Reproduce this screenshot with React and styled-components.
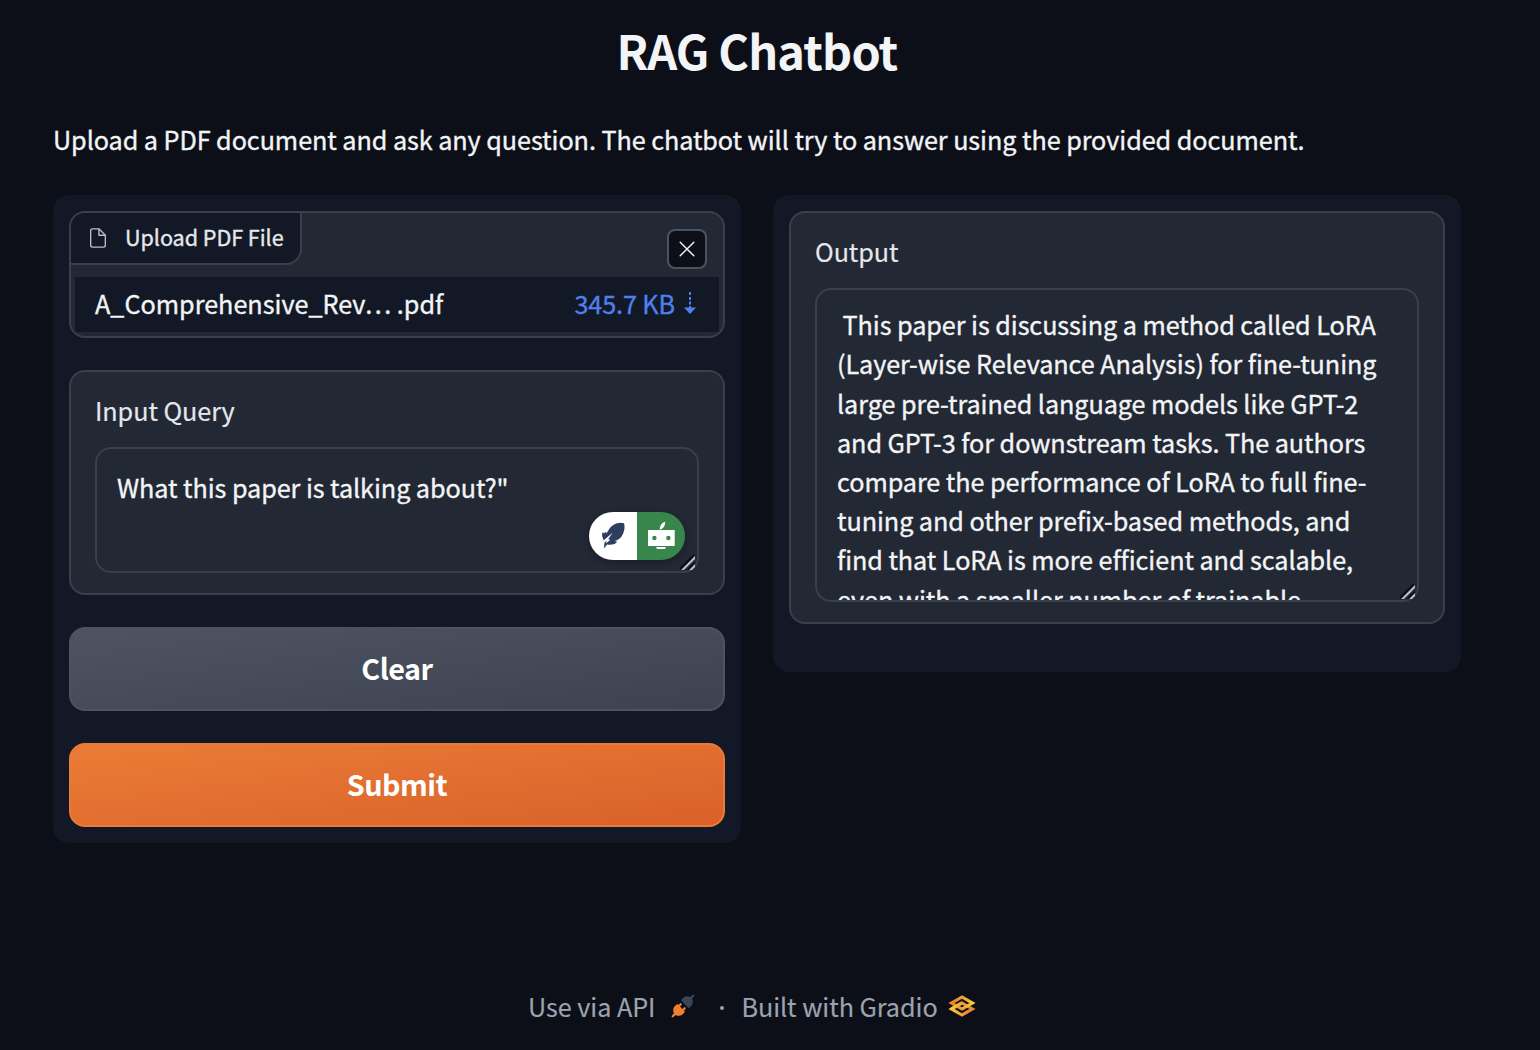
import React from "react";
import styled, { createGlobalStyle } from "styled-components";

const Global = createGlobalStyle`
  * { box-sizing: border-box; }
  body {
    margin: 0;
    background: #0c0f18;
    color: #f3f4f6;
    font-family: "Noto Sans CJK SC", "Noto Sans", sans-serif;
    font-size: 25.2px;
    letter-spacing: -0.06px;
    -webkit-text-stroke: 0.35px currentColor;
  }
`;

const Page = styled.div`
  width: 1540px;
  height: 1050px;
  overflow: hidden;
  padding: 14px 79px 0 53px;
  display: flex;
  flex-direction: column;
`;

const Title = styled.h1`
  margin: 0;
  height: 72px;
  line-height: 72px;
  text-align: center;
  font-size: 46.8px;
  font-weight: 700;
  letter-spacing: -0.84px;
  white-space: nowrap;
  -webkit-text-stroke: 0;
`;

const Description = styled.p`
  margin: 33px 0 36px;
  height: 40px;
  line-height: 40px;
  white-space: nowrap;
`;

const Columns = styled.main`
  display: flex;
  align-items: flex-start;
  gap: 32px;
`;

const Panel = styled.section`
  width: 688px;
  height: ${(p) => p.$height}px;
  padding: 16px;
  border-radius: 16px;
  background: #121825;
  display: flex;
  flex-direction: column;
  gap: 32px;
`;

const Block = styled.div`
  flex: none;
  height: ${(p) => p.$height}px;
  border: 2px solid #393f4b;
  border-radius: 16px;
  background: #222834;
  overflow: hidden;
`;

const FileBlock = styled(Block)`
  display: flex;
  flex-direction: column;
`;

const FileHeader = styled.div`
  display: flex;
  justify-content: space-between;
  height: 64px;
  padding-right: 16px;
`;

const FileLabel = styled.div`
  display: flex;
  align-items: center;
  gap: 16px;
  width: 231px;
  height: 52px;
  padding-left: 16px;
  border: solid #393f4b;
  border-width: 0 2px 2px 0;
  border-bottom-right-radius: 16px;
  background: #121825;
  color: #e5e7eb;
  font-size: 21.6px;
  line-height: 48px;
  white-space: nowrap;
`;

const LabelText = styled.span`
  height: 50px;
`;

const CloseButton = styled.button`
  width: 40px;
  height: 40px;
  margin-top: 16px;
  padding: 0;
  display: flex;
  align-items: center;
  justify-content: center;
  border: 2px solid #4c525e;
  border-radius: 8px;
  background: #0c0f18;
`;

const FileRow = styled.div`
  display: flex;
  align-items: flex-start;
  justify-content: space-between;
  height: 55px;
  margin: 0 4px;
  padding: 0 22px 0 20px;
  background: #121825;
  line-height: 53px;
  letter-spacing: 0;
  white-space: nowrap;
`;

const FileSize = styled.span`
  display: flex;
  align-items: center;
  gap: 8px;
  color: #4f80ee;
  letter-spacing: -0.1px;

  svg {
    margin-bottom: 2px;
  }
`;

const Field = styled(Block)`
  padding: 18px 24px;
`;

const FieldLabel = styled.div`
  height: 40px;
  line-height: 40px;
  margin-bottom: 17px;
  color: #e5e7eb;
  -webkit-text-stroke-width: 0.2px;
`;

const TextBox = styled.div`
  position: relative;
  height: ${(p) => p.$height}px;
  border: 2px solid #393f4b;
  border-radius: 16px;
`;

const TextContent = styled.div`
  height: 100%;
  padding: ${(p) => p.$top}px 20px 0;
  overflow: hidden;
  line-height: 39.2px;
  white-space: pre;
`;

const Grip = styled.svg`
  position: absolute;
  right: 2px;
  bottom: 1px;
`;

const Assistant = styled.div`
  position: absolute;
  right: 12px;
  bottom: 11px;
  display: flex;
  width: 96px;
  height: 48px;
  border-radius: 24px;
  overflow: hidden;
  box-shadow: 0 2px 6px rgba(0, 0, 0, 0.3);
`;

const AssistantHalf = styled.span`
  width: 48px;
  height: 48px;
  background: ${(p) => p.$color};
`;

const Button = styled.button`
  flex: none;
  height: 84px;
  padding: 0 0 2px;
  border: 2px solid ${(p) => (p.$primary ? "#ea7a35" : "#4d535f")};
  border-radius: 16px;
  background: ${(p) =>
    p.$primary
      ? "linear-gradient(to bottom right, #eb7c36, #d9602a)"
      : "linear-gradient(to bottom right, #4e5461, #3c4250)"};
  background-origin: border-box;
  color: #fff;
  font-family: inherit;
  font-size: 28.8px;
  font-weight: 700;
  letter-spacing: -0.5px;
  line-height: 78px;
  -webkit-text-stroke: 0;
`;

const Footer = styled.footer`
  display: flex;
  align-items: center;
  height: 40px;
  margin: 143px 0 0 475px;
  color: #9ca3af;
  line-height: 40px;
  white-space: nowrap;
  letter-spacing: -0.05px;
  -webkit-text-stroke-width: 0.15px;
`;

const Dot = styled.span`
  width: 4px;
  height: 4px;
  margin: 3px 17px 0 25px;
  border-radius: 50%;
  background: #9ca3af;
`;

const FooterIcon = styled.svg`
  flex: none;
  margin-left: ${(p) => p.$gap}px;
`;

const ResizeGrip = () => (
  <Grip width="15" height="15" viewBox="0 0 15 15" fill="none">
    <path d="M0 14 14 0M7.5 15.5 15 8" stroke="#080b12" strokeWidth="2" />
    <path d="M1.5 16 16 1.5M9.5 16 16 9.5" stroke="#bfc1c5" strokeWidth="2" />
  </Grip>
);

const FileIcon = () => (
  <svg width="22" height="22" viewBox="0 0 24 24" fill="none" stroke="#b9bdc5" strokeWidth="1.5" strokeLinejoin="round">
    <path d="M13 2H6a2 2 0 0 0-2 2v16a2 2 0 0 0 2 2h12a2 2 0 0 0 2-2V9z" />
    <path d="M13 2v7h7" />
  </svg>
);

const CloseIcon = () => (
  <svg width="16" height="16" viewBox="0 0 16 16" stroke="#f3f4f6" strokeWidth="1.4" strokeLinecap="round">
    <path d="M1.2 1.2l13.6 13.6M14.8 1.2L1.2 14.8" />
  </svg>
);

const DownloadArrow = () => (
  <svg width="14" height="24" viewBox="0 0 14 24" fill="#4f80ee">
    <path d="M6 1h2v3H6zM6 6h2v3H6zM6 10.5h2v3H6zM6 15h2v2H6z" />
    <path d="M1 16.5h12L7 23z" />
  </svg>
);

const Feather = () => (
  <svg width="48" height="48" viewBox="0 0 48 48">
    <path
      d="M35 11.3c-2-.9-5-.8-7.800.2-3.300 1.100-6.500 4-8.200 7.500l-1.600 2.200-1.200-1.400-1 1.600-1.600-1.200c-.7 1.600-.7 3.200-.2 4.700l1.300 3.600 1 1.200c-.6 2.200-.7 4.400-.4 6.700l2.700-3.800c2.800.5 5.200.2 7.300-.6 1.400-.6 2.200-1.500 2.700-2.600l-2.600-.4c2.700-.7 5.200-2.100 7-4.300 2.500-3.500 4-8.800 2.600-13.400z"
      fill="#2f3e60"
    />
    <path d="M14.200 28.800l9.400-8-4.400 6.500 2.200.5-4.600 3.800 1-3.200-2.100 2.100z" fill="#fff" />
  </svg>
);

const Robot = () => (
  <svg width="48" height="48" viewBox="0 0 48 48">
    <path d="M22.600 17.500c.2-4 2-6.600 5.700-7.700-.3 3.400-1.300 5.900-3.700 7.100z" fill="#fff" />
    <path d="M11 18h26.700v16H11z" fill="#fff" />
    <circle cx="17.400" cy="26" r="2.200" fill="#38864b" />
    <circle cx="31.400" cy="26" r="2.200" fill="#38864b" />
    <path d="M19 35h10l-1 2h-8z" fill="#fff" />
  </svg>
);

const PlugIcon = () => (
  <FooterIcon $gap={16} width="24" height="24" viewBox="0 0 28 28">
    <path
      fill="#3c4555"
      d="M26.94 2.94a1.33 1.33 0 0 0-1.88-1.88l-2.49 2.48c-1.45-.95-3.03-1.1-4.4-.9-1.62.25-3.06 1.03-3.78 1.75l-2 2a1.33 1.33 0 0 0 0 1.890l7.330 7.330c.52.52 1.370.52 1.890 0l2-2c.72-.72 1.500-2.160 1.750-3.790.21-1.360.05-2.940-.9-4.400z"
    />
    <path
      fill="#f17f2b"
      d="M12.280 12.940a1.330 1.330 0 0 0-1.890-1.880l-1.720 1.720-.4-.39a1.330 1.330 0 0 0-1.880 0l-2 2c-.72.72-1.500 2.160-1.750 3.790-.21 1.360-.05 2.940.9 4.390l-2.480 2.490a1.330 1.330 0 0 0 1.880 1.880l2.490-2.480c1.450.95 3.030 1.110 4.400.9 1.620-.25 3.060-1.030 3.780-1.750l2-2a1.330 1.330 0 0 0 0-1.880l-.39-.4 1.720-1.720a1.330 1.330 0 0 0-1.880-1.880l-1.730 1.720-2.780-2.780z"
    />
  </FooterIcon>
);

const GradioIcon = () => (
  <FooterIcon $gap={9} width="30" height="30" viewBox="0 0 576 576" fill="none" strokeWidth="59">
    <defs>
      <linearGradient id="lower" x1="60" y1="341" x2="429.5" y2="344" gradientUnits="userSpaceOnUse">
        <stop stopColor="#f4cf3a" />
        <stop offset="1" stopColor="#ec8431" />
      </linearGradient>
      <linearGradient id="upper" x1="513.5" y1="231" x2="143.5" y2="231" gradientUnits="userSpaceOnUse">
        <stop stopColor="#f4cf3a" />
        <stop offset="1" stopColor="#ec8431" />
      </linearGradient>
    </defs>
    <path d="M287.5 229L86 344.5L287.5 460L489 344.5L287.5 229Z" stroke="url(#lower)" />
    <path d="M287.5 116L86 231.5L287.5 347L489 231.5L287.5 116Z" stroke="url(#upper)" />
    <path d="M86 344L288 229" stroke="url(#lower)" strokeLinejoin="bevel" />
  </FooterIcon>
);

const ANSWER = [
  " This paper is discussing a method called LoRA",
  "(Layer-wise Relevance Analysis) for fine-tuning",
  "large pre-trained language models like GPT-2",
  "and GPT-3 for downstream tasks. The authors",
  "compare the performance of LoRA to full fine-",
  "tuning and other prefix-based methods, and",
  "find that LoRA is more efficient and scalable,",
  "even with a smaller number of trainable",
].join("\n");

export default function App() {
  return (
    <Page>
      <Global />
      <Title>RAG Chatbot</Title>
      <Description>
        Upload a PDF document and ask any question. The chatbot will try to answer using the provided document.
      </Description>
      <Columns>
        <Panel $height={648}>
          <FileBlock $height={127}>
            <FileHeader>
              <FileLabel>
                <FileIcon />
                <LabelText>Upload PDF File</LabelText>
              </FileLabel>
              <CloseButton aria-label="Remove file">
                <CloseIcon />
              </CloseButton>
            </FileHeader>
            <FileRow>
              <span>A_Comprehensive_Rev… .pdf</span>
              <FileSize>
                345.7 KB
                <DownloadArrow />
              </FileSize>
            </FileRow>
          </FileBlock>
          <Field $height={225}>
            <FieldLabel>Input Query</FieldLabel>
            <TextBox $height={126}>
              <TextContent $top={19}>What this paper is talking about?"</TextContent>
              <Assistant>
                <AssistantHalf $color="#fff">
                  <Feather />
                </AssistantHalf>
                <AssistantHalf $color="#38864b">
                  <Robot />
                </AssistantHalf>
              </Assistant>
              <ResizeGrip />
            </TextBox>
          </Field>
          <Button>Clear</Button>
          <Button $primary>Submit</Button>
        </Panel>
        <Panel $height={477}>
          <Field $height={413}>
            <FieldLabel>Output</FieldLabel>
            <TextBox $height={314}>
              <TextContent $top={15.2}>{ANSWER}</TextContent>
              <ResizeGrip />
            </TextBox>
          </Field>
        </Panel>
      </Columns>
      <Footer>
        Use via API
        <PlugIcon />
        <Dot />
        Built with Gradio
        <GradioIcon />
      </Footer>
    </Page>
  );
}
